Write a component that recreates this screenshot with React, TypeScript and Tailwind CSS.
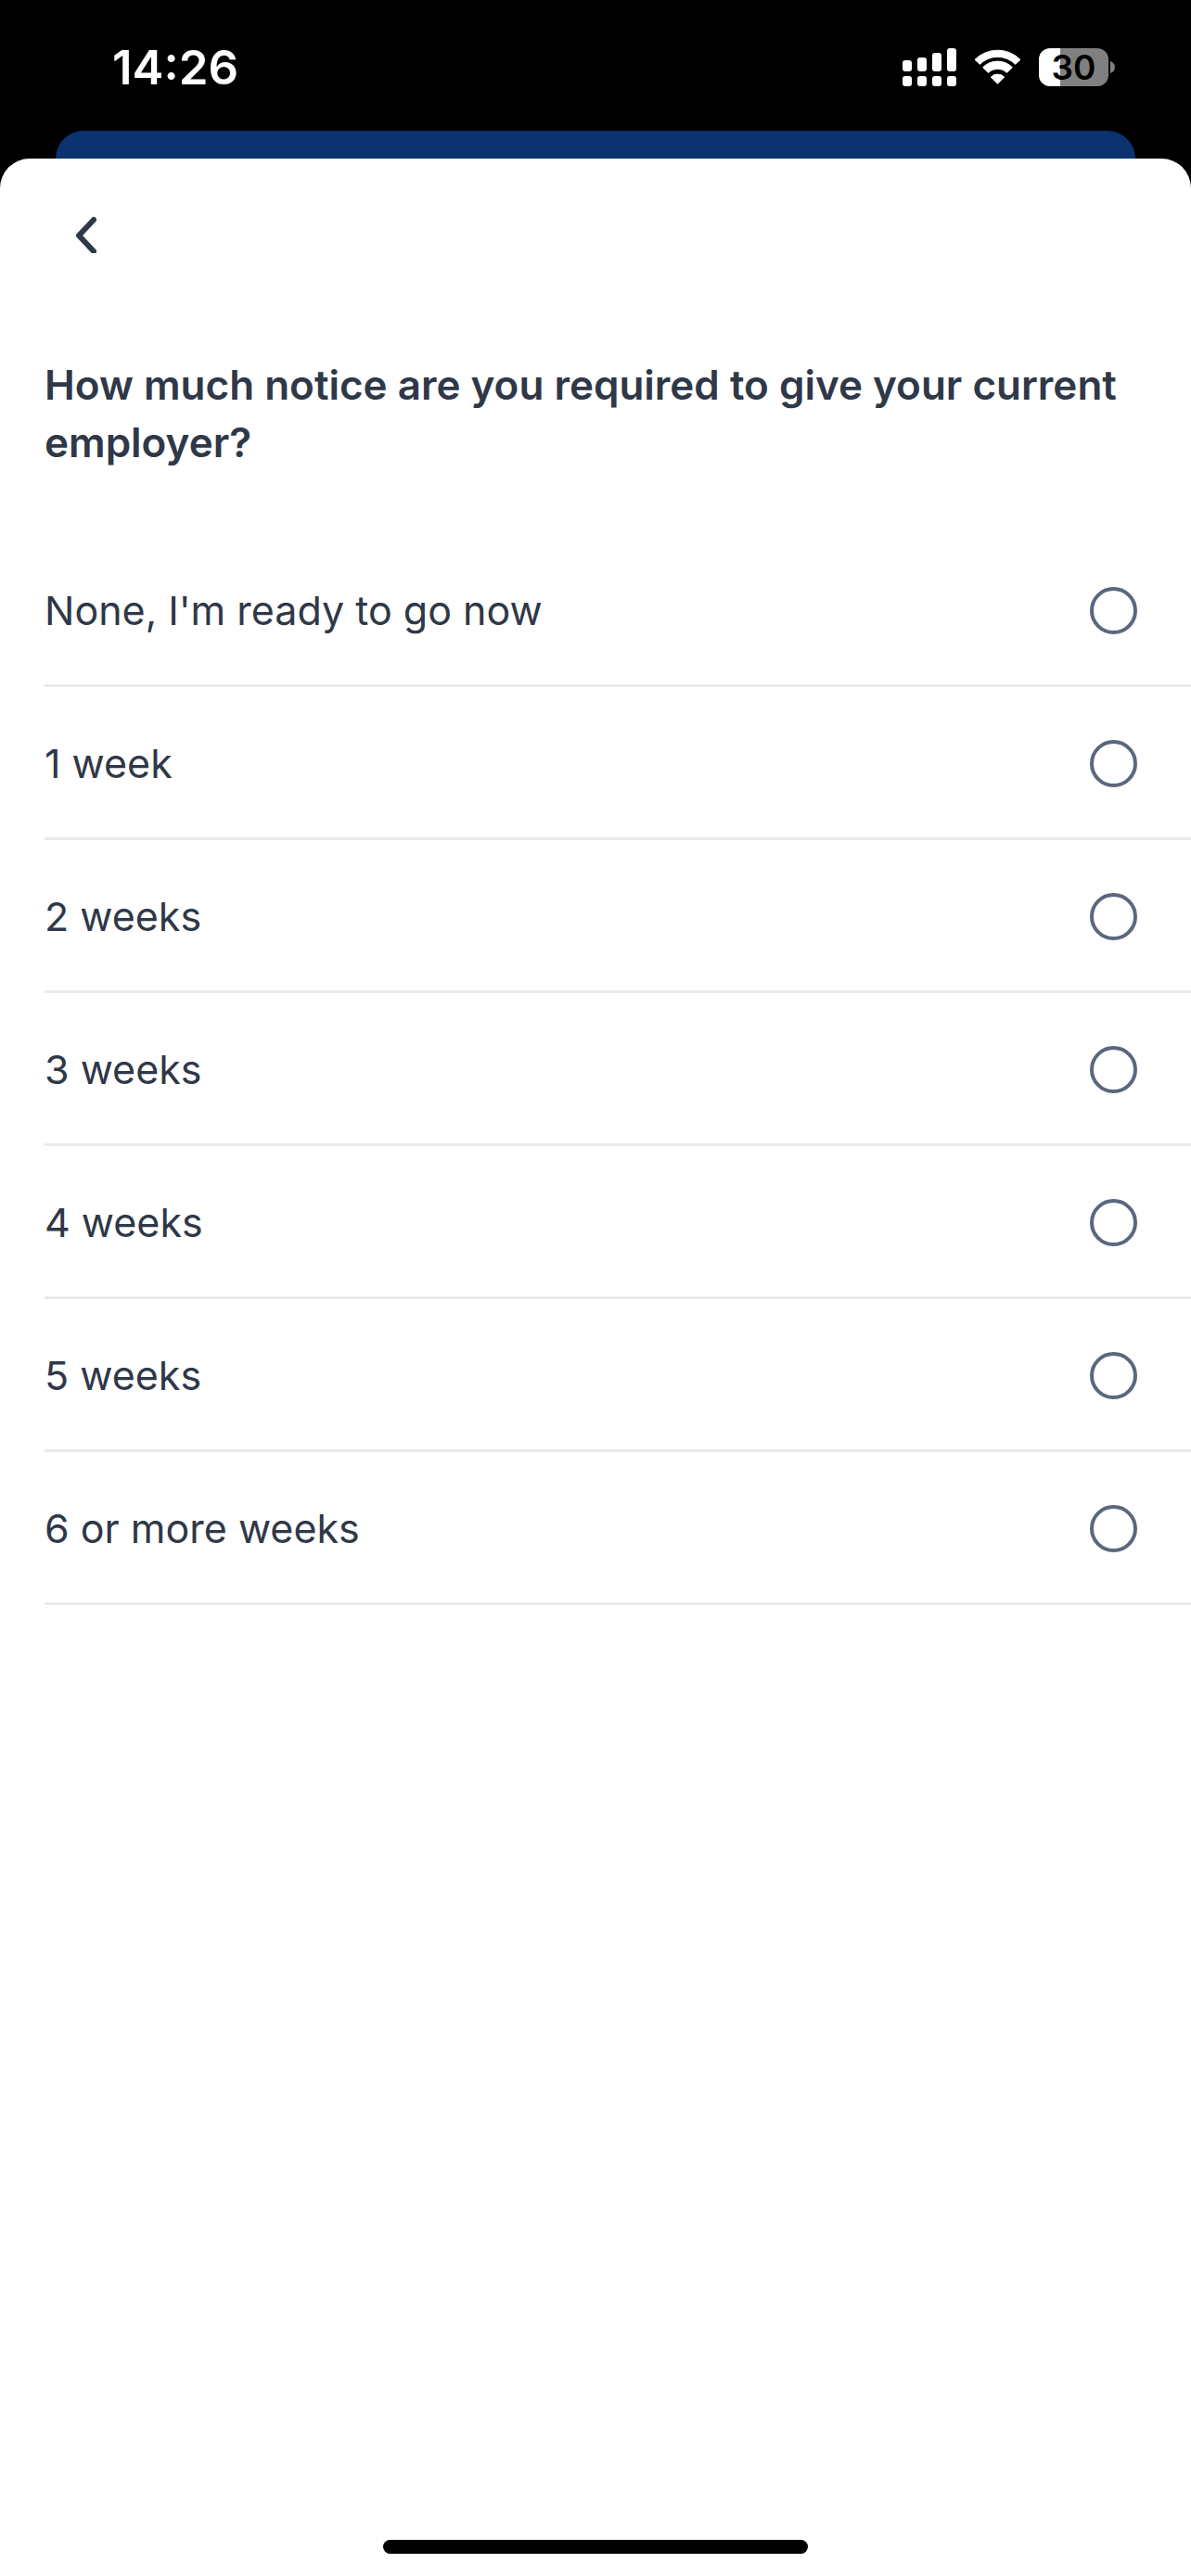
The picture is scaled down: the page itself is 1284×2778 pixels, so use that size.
import { useState } from "react";

const noticePeriods = [
  "None, I'm ready to go now",
  "1 week",
  "2 weeks",
  "3 weeks",
  "4 weeks",
  "5 weeks",
  "6 or more weeks",
];

const SignalIcon = () => (
  <svg width="58" height="41" viewBox="0 0 58 41" fill="white" aria-hidden="true">
    <rect x="0" y="13" width="10" height="12" rx="3" />
    <rect x="16" y="10" width="10" height="15" rx="3" />
    <rect x="32" y="5" width="10" height="20" rx="3" />
    <rect x="48" y="0" width="10" height="25" rx="3" />
    <rect x="0" y="30" width="10" height="11" rx="3" />
    <rect x="16" y="30" width="10" height="11" rx="3" />
    <rect x="32" y="30" width="10" height="11" rx="3" />
    <rect x="48" y="30" width="10" height="11" rx="3" />
  </svg>
);

const WifiIcon = () => (
  <svg
    width="51"
    height="41"
    viewBox="330 96 153 123"
    fill="white"
    stroke="white"
    strokeWidth="3"
    strokeLinejoin="round"
    aria-hidden="true"
  >
    <path d="M333 133 A104 104 0 0 1 480 133 L464 148 A81 81 0 0 0 349 148 Z" />
    <path d="M359 158 A67 67 0 0 1 454 158 L437 175 A44 44 0 0 0 376 175 Z" />
    <path d="M385 189 A31 31 0 0 1 428 189 L406.500 211 Z" />
  </svg>
);

const Battery = () => (
  <div className="flex items-center gap-[2px]">
    <div className="flex h-[41px] w-[75px] items-center justify-center rounded-[12px] bg-linear-to-r from-white from-[31%] to-[#808080] to-[31%]">
      <span className="text-[37px] leading-none font-semibold text-black">30</span>
    </div>
    <svg width="5" height="13" viewBox="0 0 5 13" fill="#808080" aria-hidden="true">
      <path d="M0 0 C3 1 5 3.500 5 6.500 C5 9.500 3 12 0 13 Z" />
    </svg>
  </div>
);

const StatusBar = () => (
  <div className="flex h-[141px] items-center justify-between pt-1 pr-[82px] pl-[121px]">
    <span className="text-[51px] leading-none font-semibold text-white">14:26</span>
    <div className="flex items-center gap-[19px]">
      <SignalIcon />
      <WifiIcon />
      <Battery />
    </div>
  </div>
);

interface NoticeOptionProps {
  label: string;
  checked: boolean;
  onSelect: () => void;
}

const NoticeOption: React.FC<NoticeOptionProps> = ({ label, checked, onSelect }) => {
  return (
    <label className="flex h-[165px] cursor-pointer items-center justify-between border-b-3 border-[#e9eaeb] pt-[2px] pr-[58px]">
      <span className="text-[43px] leading-[62px]">{label}</span>
      <input
        type="radio"
        name="notice"
        value={label}
        checked={checked}
        onChange={onSelect}
        className="size-[51px] shrink-0 appearance-none rounded-full border-4 border-[#5b677f] checked:border-[14px]"
      />
    </label>
  );
};

export default function App() {
  const [selected, setSelected] = useState<string | null>(null);

  return (
    <div className="flex min-h-screen flex-col bg-black font-['Inter','Liberation_Sans',sans-serif] text-[#2f3848]">
      <StatusBar />
      {/* edge of the screen behind the sheet */}
      <div className="mx-[60px] h-[30px] rounded-t-[30px] bg-[#0c326f]" />

      <main className="flex grow flex-col rounded-t-[32px] bg-white">
        <header className="px-[48px] pt-[38px]">
          <button type="button" aria-label="Back" className="flex size-[88px] items-center justify-center">
            <svg
              width="24"
              height="40"
              viewBox="0 0 24 40"
              fill="none"
              stroke="currentColor"
              strokeWidth="6"
              strokeLinecap="round"
              strokeLinejoin="round"
              aria-hidden="true"
            >
              <path d="M21 4 L5 21 L21 38" />
            </svg>
          </button>
        </header>

        <h1 id="notice-title" className="mt-[87px] px-[48px] text-[44px] leading-[62px] font-semibold">
          How much notice are you required to give your current employer?
        </h1>

        <div role="radiogroup" aria-labelledby="notice-title" className="mt-[68px] pl-[48px]">
          {noticePeriods.map((period) => (
            <NoticeOption
              key={period}
              label={period}
              checked={selected === period}
              onSelect={() => setSelected(period)}
            />
          ))}
        </div>

        <div className="mx-auto mt-auto mb-[24px] h-[15px] w-[458px] rounded-full bg-black" />
      </main>
    </div>
  );
}
